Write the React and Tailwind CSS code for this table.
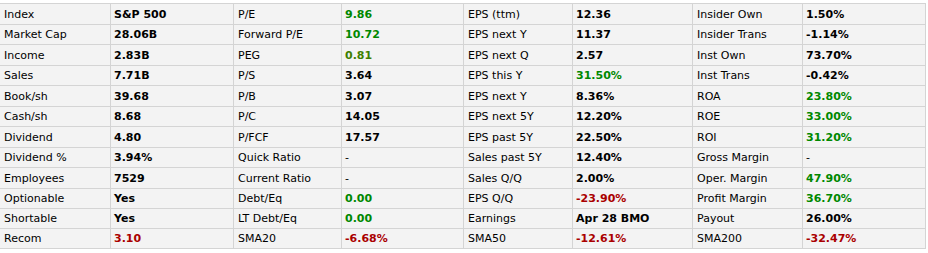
const rows = [
  [["Index", "S&P 500"], ["P/E", "9.86", "g"], ["EPS (ttm)", "12.36"], ["Insider Own", "1.50%"]],
  [["Market Cap", "28.06B"], ["Forward P/E", "10.72", "g"], ["EPS next Y", "11.37"], ["Insider Trans", "-1.14%"]],
  [["Income", "2.83B"], ["PEG", "0.81", "o"], ["EPS next Q", "2.57"], ["Inst Own", "73.70%"]],
  [["Sales", "7.71B"], ["P/S", "3.64"], ["EPS this Y", "31.50%", "g"], ["Inst Trans", "-0.42%"]],
  [["Book/sh", "39.68"], ["P/B", "3.07"], ["EPS next Y", "8.36%"], ["ROA", "23.80%", "g"]],
  [["Cash/sh", "8.68"], ["P/C", "14.05"], ["EPS next 5Y", "12.20%"], ["ROE", "33.00%", "g"]],
  [["Dividend", "4.80"], ["P/FCF", "17.57"], ["EPS past 5Y", "22.50%"], ["ROI", "31.20%", "g"]],
  [["Dividend %", "3.94%"], ["Quick Ratio", "-", "n"], ["Sales past 5Y", "12.40%"], ["Gross Margin", "-", "n"]],
  [["Employees", "7529"], ["Current Ratio", "-", "n"], ["Sales Q/Q", "2.00%"], ["Oper. Margin", "47.90%", "g"]],
  [["Optionable", "Yes"], ["Debt/Eq", "0.00", "g"], ["EPS Q/Q", "-23.90%", "r"], ["Profit Margin", "36.70%", "g"]],
  [["Shortable", "Yes"], ["LT Debt/Eq", "0.00", "g"], ["Earnings", "Apr 28 BMO"], ["Payout", "26.00%"]],
  [["Recom", "3.10", "r"], ["SMA20", "-6.68%", "r"], ["SMA50", "-12.61%", "r"], ["SMA200", "-32.47%", "r"]],
];

const tone = {
  g: "font-bold text-[#008800]",
  o: "font-bold text-[#3f7f00]",
  r: "font-bold text-[#aa0000]",
  n: "font-normal text-black",
};

export default function App() {
  return (
    <div className="h-[253px] w-[928px] bg-white pt-[3px] font-['DejaVu_Sans',Verdana,sans-serif] text-[11px] leading-none">
      <div className="grid w-[926px] grid-cols-[110px_122px_107px_121px_108px_119px_109px_122px] grid-rows-[20px_19px_20px_19px_20px_19px_20px_19px_20px_19px_19px_19px] gap-px border-y border-r border-[#d4d4d4] bg-[#d4d4d4]">
        {rows.map((row) =>
          row.map(([label, value, t]) => [
            <div key={label + "l" + value} className="flex items-center bg-[#f3f3f3] pl-[4px] text-black">
              {label}
            </div>,
            <div
              key={label + "v" + value}
              className={`flex items-center bg-[#f3f3f3] pl-[3px] ${t ? tone[t] : "font-bold text-black"}`}
            >
              {value}
            </div>,
          ])
        )}
      </div>
    </div>
  );
}
